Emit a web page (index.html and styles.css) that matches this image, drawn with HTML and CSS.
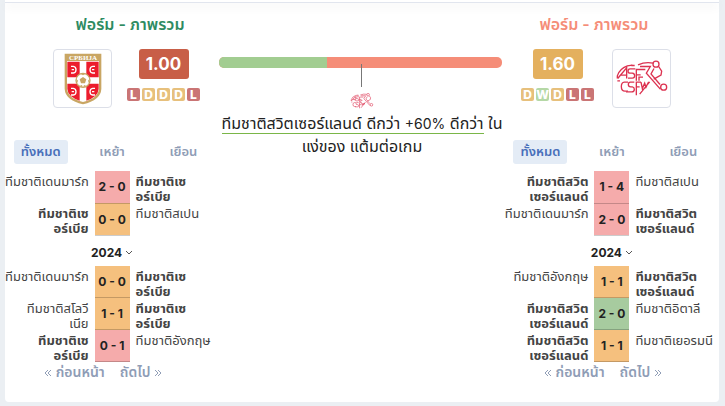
FILE: index.html
```html
<!DOCTYPE html>
<html lang="th">
<head>
    <meta charset="UTF-8">
    <meta name="viewport" content="width=device-width, initial-scale=1.0">
    <title>ฟอร์ม - ภาพรวม</title>
    <link rel="stylesheet" href="styles.css">
</head>
<body>
    <svg class="defs" width="0" height="0" aria-hidden="true">
        <symbol id="swiss" viewBox="375 181 156 110">
            <g fill="none" stroke="#dc3250" stroke-width="4">
                <path d="M379 236V228Q385 207 409 198L424 196M380 236L407 204V236M379 243H387M388 226H407"/>
                <path d="M433 207H417Q411 207 411 214Q411 220 418 220H424Q431 221 431 228Q431 235 424 235H411"/>
                <path d="M431 197H421M453 209H436V243M436 225H449M444 243V232H456M453 209H463"/>
                <path d="M411 247H400Q391 248 391 260Q391 274 402 274H411"/>
                <path d="M430 247H418Q412 247 412 254Q412 261 419 261H424Q430 262 430 268Q430 276 422 276H405"/>
                <path d="M450 247H436V286M436 261H446M450 247L454 266L461 250L465 262L473 246M446 283L476 246"/>
                <path d="M441 195Q464 185 486 190M447 200H478L466 220L508 268M503 200L512 214L510 226L488 238M489 206L480 222L507 254"/>
                <circle cx="495" cy="193" r="9"/>
                <circle cx="518" cy="262" r="9"/>
            </g>
        </symbol>
    </svg>
    <div class="topbar"></div>
    <div class="card">
        <div class="team home">
            <div class="overview">
                <h3>ฟอร์ม - ภาพรวม</h3>
                <div class="info">
                    <div class="logo">
                        <svg width="38" height="52" viewBox="0 0 114 156" role="img" aria-label="เซอร์เบีย">
                            <path d="M2 2H112V108Q110 142 57 154Q4 142 2 108Z" fill="#c9a663"/>
                            <path d="M9 24H105V108Q102 136 57 147Q12 136 9 108Z" fill="#fff"/>
                            <path d="M10 26H47V73H10ZM67 26H104V73H67ZM10 92H47V143Q12 132 10 108ZM67 92H104V108Q102 132 67 143Z" fill="#ec1c2c"/>
                            <g fill="none" stroke="#fff" stroke-width="4">
                                <path d="M21 40H28Q36 41 36 50Q36 59 28 60H21M23 50H30M93 40H86Q78 41 78 50Q78 59 86 60H93M91 50H84M21 106H28Q36 107 36 116Q36 125 28 126H21M23 116H30M93 106H86Q78 107 78 116Q78 125 86 126H93M91 116H84"/>
                            </g>
                            <circle cx="57" cy="82" r="21" fill="#fff" stroke="#c9a663" stroke-width="4"/>
                            <path d="M57 72L67 79L63 91H51L47 79ZM49 62L57 67L65 62ZM37 77L42 83L39 91ZM77 77L72 83L75 91ZM46 99L54 96L56 103ZM68 99L60 96L58 103Z" fill="#c9a663"/>
                            <text x="57" y="20" text-anchor="middle" class="crest-text">СРБИЈА</text>
                        </svg>
                    </div>
                    <div class="rating">
                        <div class="score-box low">1.00</div>
                        <div class="form"><span class="l">L</span><span class="d">D</span><span class="d">D</span><span class="d">D</span><span class="l">L</span></div>
                    </div>
                </div>
            </div>
            <div class="tabs">
                <button class="tab active">ทั้งหมด</button>
                <button class="tab">เหย้า</button>
                <button class="tab">เยือน</button>
            </div>
            <table class="matches">
                <tr><td><div class="name">ทีมชาติเดนมาร์ก</div></td><td class="result lose">2 - 0</td><td><div class="name bold">ทีมชาติเซ<br>อร์เบีย</div></td></tr>
                <tr><td><div class="name bold">ทีมชาติเซ<br>อร์เบีย</div></td><td class="result draw">0 - 0</td><td><div class="name">ทีมชาติสเปน</div></td></tr>
            </table>
            <button class="year">2024 <svg width="8" height="5" viewBox="0 0 8 5"><path d="M1 1L4 4L7 1" fill="none" stroke="#555" /></svg></button>
            <table class="matches">
                <tr><td><div class="name">ทีมชาติเดนมาร์ก</div></td><td class="result draw">0 - 0</td><td><div class="name bold">ทีมชาติเซ<br>อร์เบีย</div></td></tr>
                <tr><td><div class="name">ทีมชาติสโลวี<br>เนีย</div></td><td class="result draw">1 - 1</td><td><div class="name bold">ทีมชาติเซ<br>อร์เบีย</div></td></tr>
                <tr><td><div class="name bold">ทีมชาติเซ<br>อร์เบีย</div></td><td class="result lose">0 - 1</td><td><div class="name">ทีมชาติอังกฤษ</div></td></tr>
            </table>
            <div class="pager">
                <a href="#"><svg width="8" height="8" viewBox="0 0 8 8"><path d="M4 1L1 4L4 7M7 1L4 4L7 7"/></svg> ก่อนหน้า</a>
                <a href="#">ถัดไป <svg width="8" height="8" viewBox="0 0 8 8"><path d="M1 1L4 4L1 7M4 1L7 4L4 7"/></svg></a>
            </div>
        </div>

        <div class="compare">
            <div class="bar"><div class="bar-home" style="width: 38%"></div></div>
            <div class="pointer"></div>
            <svg class="mini-logo" width="24" height="16" role="img" aria-label="สวิตเซอร์แลนด์"><use href="#swiss"/></svg>
            <p><span class="better">ทีมชาติสวิตเซอร์แลนด์ ดีกว่า <span class="percent">+60%</span> ดีกว่า</span> ใน<br>แง่ของ แต้มต่อเกม</p>
        </div>

        <div class="team away">
            <div class="overview">
                <h3>ฟอร์ม - ภาพรวม</h3>
                <div class="info">
                    <div class="rating">
                        <div class="score-box mid">1.60</div>
                        <div class="form"><span class="d">D</span><span class="w">W</span><span class="d">D</span><span class="l">L</span><span class="l">L</span></div>
                    </div>
                    <div class="logo"><svg width="52" height="37" role="img" aria-label="สวิตเซอร์แลนด์"><use href="#swiss"/></svg></div>
                </div>
            </div>
            <div class="tabs">
                <button class="tab active">ทั้งหมด</button>
                <button class="tab">เหย้า</button>
                <button class="tab">เยือน</button>
            </div>
            <table class="matches">
                <tr><td><div class="name bold">ทีมชาติสวิต<br>เซอร์แลนด์</div></td><td class="result lose">1 - 4</td><td><div class="name">ทีมชาติสเปน</div></td></tr>
                <tr><td><div class="name">ทีมชาติเดนมาร์ก</div></td><td class="result lose">2 - 0</td><td><div class="name bold">ทีมชาติสวิต<br>เซอร์แลนด์</div></td></tr>
            </table>
            <button class="year">2024 <svg width="8" height="5" viewBox="0 0 8 5"><path d="M1 1L4 4L7 1" fill="none" stroke="#555" /></svg></button>
            <table class="matches">
                <tr><td><div class="name">ทีมชาติอังกฤษ</div></td><td class="result draw">1 - 1</td><td><div class="name bold">ทีมชาติสวิต<br>เซอร์แลนด์</div></td></tr>
                <tr><td><div class="name bold">ทีมชาติสวิต<br>เซอร์แลนด์</div></td><td class="result win">2 - 0</td><td><div class="name">ทีมชาติอิตาลี</div></td></tr>
                <tr><td><div class="name bold">ทีมชาติสวิต<br>เซอร์แลนด์</div></td><td class="result draw">1 - 1</td><td><div class="name">ทีมชาติเยอรมนี</div></td></tr>
            </table>
            <div class="pager">
                <a href="#"><svg width="8" height="8" viewBox="0 0 8 8"><path d="M4 1L1 4L4 7M7 1L4 4L7 7"/></svg> ก่อนหน้า</a>
                <a href="#">ถัดไป <svg width="8" height="8" viewBox="0 0 8 8"><path d="M1 1L4 4L1 7M4 1L7 4L4 7"/></svg></a>
            </div>
        </div>
    </div>
</body>
</html>
```
FILE: styles.css
```css
*{
    margin: 0;
    padding: 0;
    box-sizing: border-box;
}
body{
    background-color: #ebeff3;
    padding: 0 6px 4px 5px;
    font-family: Inter, "Noto Sans Thai", "Noto Sans", sans-serif;
    font-size: 13px;
    color: #222;
}
button{
    border: none;
    background: none;
    font-family: inherit;
    cursor: pointer;
}
.defs{
    display: block;
}
.topbar{
    height: 3px;
    background-color: white;
    border-bottom: 1px solid #e1e5ee;
    box-shadow: 0 4px 10px rgba(0, 0, 0, 0.07);
    position: relative;
}
.card{
    display: grid;
    grid-template-columns: 3fr 4fr 3fr;
    background-color: white;
    border-radius: 0 0 4px 4px;
    padding-bottom: 20px;
}
.overview{
    display: flex;
    flex-direction: column;
    padding: 11px 12px 0 48px;
    height: 137px;
}
.away .overview{
    padding: 11px 48px 0 12px;
}
h3{
    font-size: 16px;
    line-height: 20px;
    font-weight: 600;
    text-align: center;
    color: #2e8b62;
    margin-bottom: 15px;
}
.away h3{
    color: #f58d78;
}
.info{
    display: flex;
    gap: 15px;
}
.away .info{
    justify-content: flex-end;
    gap: 18px;
}
.logo{
    width: 59px;
    height: 59px;
    display: flex;
    align-items: center;
    justify-content: center;
    border: 1px solid #dcdfe8;
    border-radius: 4px;
}
.crest-text{
    font-family: "Liberation Serif", serif;
    font-size: 21px;
    font-weight: bold;
    fill: white;
}
.rating{
    display: flex;
    flex-direction: column;
    align-items: center;
    gap: 9px;
}
.score-box{
    width: 50px;
    height: 30px;
    line-height: 31px;
    border-radius: 3px;
    text-align: center;
    font-size: 17px;
    font-weight: 700;
    color: white;
}
.low{
    background-color: #c85e47;
}
.mid{
    background-color: #e4b05e;
}
.form{
    display: flex;
    gap: 2px;
}
.form span{
    width: 13px;
    height: 13px;
    line-height: 13px;
    border-radius: 2px;
    text-align: center;
    font-size: 12px;
    font-weight: 800;
    color: white;
}
.l{
    background-color: #ca7575;
}
.d{
    background-color: #e7c07c;
}
.w{
    background-color: #b5d8a6;
}
.tabs{
    display: grid;
    grid-template-columns: repeat(3, 1fr);
    justify-items: center;
    margin-bottom: 7px;
}
.tab{
    width: 54px;
    height: 24px;
    border-radius: 3px;
    font-size: 13px;
    font-weight: 600;
    color: #8f9db6;
}
.active{
    background-color: #e4ecf6;
    color: #486fba;
}
.matches{
    width: 100%;
    table-layout: fixed;
    border-collapse: collapse;
}
.matches td{
    height: 32px;
    vertical-align: top;
}
.matches .result{
    width: 35px;
    vertical-align: middle;
    text-align: center;
    font-size: 12px;
    font-weight: 700;
    border-bottom: 1px solid rgba(0, 0, 0, 0.2);
}
.name{
    height: 31px;
    padding: 3px 0 0 6px;
    line-height: 15px;
    white-space: nowrap;
    color: #444;
}
.matches td:first-child .name{
    text-align: right;
    padding: 3px 6px 0 0;
}
.bold{
    font-weight: 700;
}
.lose{
    background-color: #f5abab;
}
.draw{
    background-color: #f5c07e;
}
.win{
    background-color: #a7cb9f;
}
.year{
    display: flex;
    align-items: center;
    justify-content: center;
    gap: 3px;
    width: 100%;
    height: 30px;
    padding-top: 3px;
    font-size: 12px;
    font-weight: 700;
    color: #222;
}
.pager{
    display: flex;
    justify-content: center;
    gap: 15px;
    padding-right: 18px;
    line-height: 20px;
}
.pager a{
    font-size: 14px;
    font-weight: 600;
    color: #8f9db6;
    text-decoration: none;
}
.pager path{
    fill: none;
    stroke: #8f9db6;
}
.compare{
    display: flex;
    flex-direction: column;
    align-items: center;
    padding-top: 54px;
}
.bar{
    width: 99%;
    height: 11px;
    align-self: flex-start;
    border-radius: 5px;
    overflow: hidden;
    background-color: #f58d78;
}
.bar-home{
    height: 100%;
    background-color: #a2cd91;
}
.pointer{
    width: 1px;
    height: 23px;
    margin-top: -4px;
    background-color: #777;
    position: relative;
}
.mini-logo{
    margin: 6px 0 3px;
}
.compare p{
    font-size: 16px;
    line-height: 22px;
    text-align: center;
    white-space: nowrap;
}
.percent{
    font-size: 14px;
}
.better{
    border-bottom: 1px solid #7ab648;
}
```
